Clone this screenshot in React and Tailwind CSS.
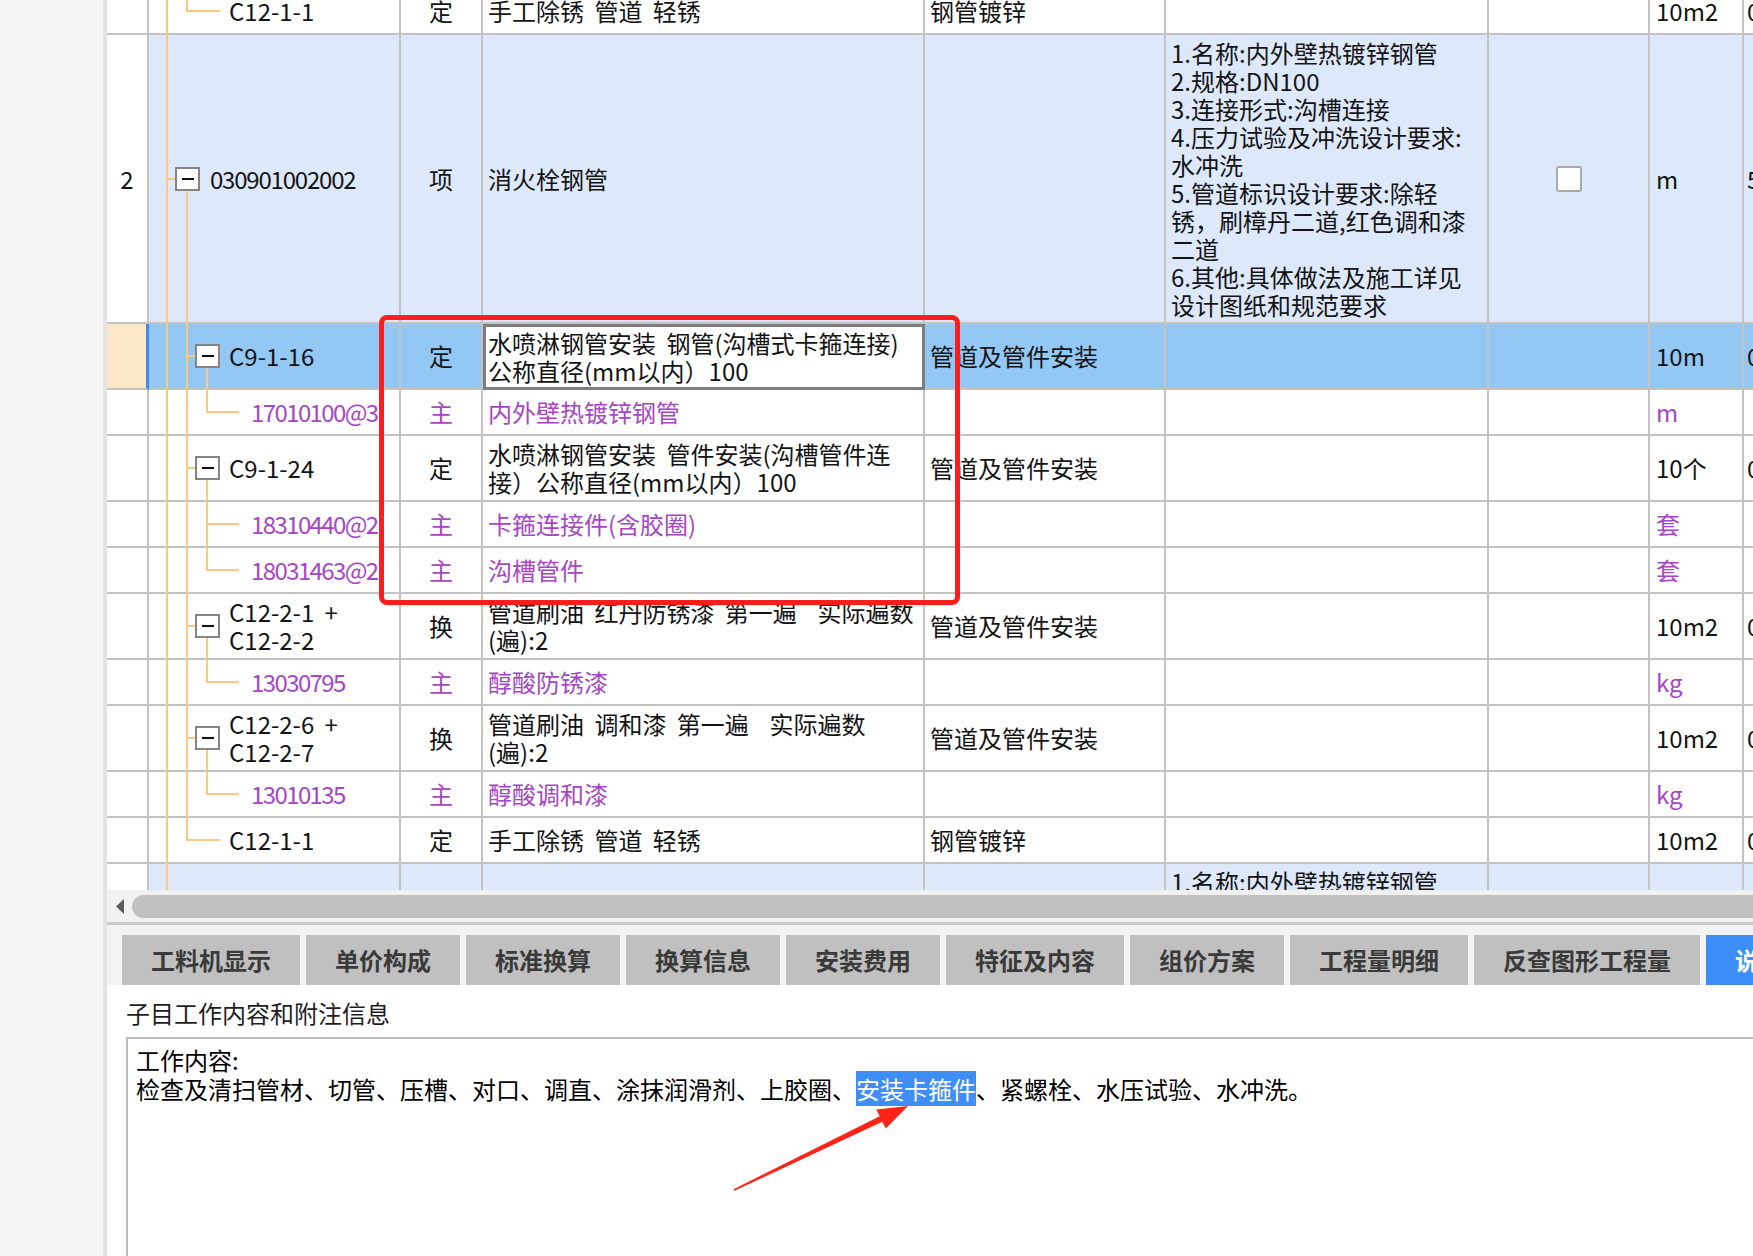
import React from 'react';

const FEATURES = [
  '1.名称:内外壁热镀锌钢管',
  '2.规格:DN100',
  '3.连接形式:沟槽连接',
  '4.压力试验及冲洗设计要求:',
  '水冲洗',
  '5.管道标识设计要求:除轻',
  '锈，刷樟丹二道,红色调和漆',
  '二道',
  '6.其他:具体做法及施工详见',
  '设计图纸和规范要求',
];

const ROWS = [
  { h: 'h-[46px]', t: { b: 'top', hb: true }, lv: 3, code: ['C12-1-1'], type: '定', name: ['手工除锈 管道 轻锈'], spec: '钢管镀锌', unit: '10m2', last: '0.6' },
  { h: 'h-[289px]', bg: 'b', num: '2', t: { box2: true, b: 'box' }, lv: 2, code: ['030901002002'], type: '项', name: ['消火栓钢管'], feat: FEATURES, check: true, unit: 'm', last: '5' },
  { h: 'h-[66px]', bg: 's', edit: true, t: { b: 'full', box3: true, c: 'box' }, lv: 3, code: ['C9-1-16'], type: '定', name: ['水喷淋钢管安装 钢管(沟槽式卡箍连接)', '公称直径(mm以内）100'], spec: '管道及管件安装', unit: '10m', last: '0.6' },
  { h: 'h-[46px]', p: true, t: { b: 'full', c: 'top', hc: true }, lv: 4, code: ['17010100@3'], type: '主', name: ['内外壁热镀锌钢管'], unit: 'm' },
  { h: 'h-[66px]', t: { b: 'full', box3: true, c: 'box' }, lv: 3, code: ['C9-1-24'], type: '定', name: ['水喷淋钢管安装 管件安装(沟槽管件连', '接）公称直径(mm以内）100'], spec: '管道及管件安装', unit: '10个', last: '0.6' },
  { h: 'h-[46px]', p: true, t: { b: 'full', c: 'full', hc: true }, lv: 4, code: ['18310440@2'], type: '主', name: ['卡箍连接件(含胶圈)'], unit: '套' },
  { h: 'h-[46px]', p: true, t: { b: 'full', c: 'top', hc: true }, lv: 4, code: ['18031463@2'], type: '主', name: ['沟槽管件'], unit: '套' },
  { h: 'h-[66px]', t: { b: 'full', box3: true, c: 'box' }, lv: 3, code: ['C12-2-1 +', 'C12-2-2'], type: '换', name: ['管道刷油 红丹防锈漆 第一遍  实际遍数', '(遍):2'], spec: '管道及管件安装', unit: '10m2', last: '0.6' },
  { h: 'h-[46px]', p: true, t: { b: 'full', c: 'top', hc: true }, lv: 4, code: ['13030795'], type: '主', name: ['醇酸防锈漆'], unit: 'kg' },
  { h: 'h-[66px]', t: { b: 'full', box3: true, c: 'box' }, lv: 3, code: ['C12-2-6 +', 'C12-2-7'], type: '换', name: ['管道刷油 调和漆 第一遍  实际遍数', '(遍):2'], spec: '管道及管件安装', unit: '10m2', last: '0.6' },
  { h: 'h-[46px]', p: true, t: { b: 'full', c: 'top', hc: true }, lv: 4, code: ['13010135'], type: '主', name: ['醇酸调和漆'], unit: 'kg' },
  { h: 'h-[46px]', t: { b: 'top', hb: true }, lv: 3, code: ['C12-1-1'], type: '定', name: ['手工除锈 管道 轻锈'], spec: '钢管镀锌', unit: '10m2', last: '0.6' },
  { h: 'h-[289px]', bg: 'b', t: {}, lv: 2, code: [], name: [], feat: ['1.名称:内外壁热镀锌钢管'], featTop: true },
];

const TABS = ['工料机显示', '单价构成', '标准换算', '换算信息', '安装费用', '特征及内容', '组价方案', '工程量明细', '反查图形工程量'];

const C = 'shrink-0 flex items-center';
const G = 'border-r-2 border-b-2 border-[#c3c3c3]';
const L = 'absolute bg-[#fcc77e]';

function Box({ left }) {
  return (
    <span className={`absolute ${left} top-[calc(50%-12px)] w-[25px] h-[24px] border-2 border-[#858585] bg-white flex items-center justify-center`}>
      <span className="w-[12px] h-[2px] bg-[#111]" />
    </span>
  );
}

function Tree({ t = {} }) {
  return (
    <>
      <span className={`${L} left-[17px] w-[2px] top-0 -bottom-[2px]`} />
      {t.b === 'full' && <span className={`${L} left-[37px] w-[2px] top-0 -bottom-[2px]`} />}
      {t.b === 'top' && <span className={`${L} left-[37px] w-[2px] top-0 h-[calc(50%+1px)]`} />}
      {t.b === 'box' && <span className={`${L} left-[37px] w-[2px] top-[calc(50%+12px)] -bottom-[2px]`} />}
      {t.hb && <span className={`${L} left-[38px] w-[33px] top-[calc(50%-1px)] h-[2px]`} />}
      {t.c === 'full' && <span className={`${L} left-[57px] w-[2px] top-0 -bottom-[2px]`} />}
      {t.c === 'top' && <span className={`${L} left-[57px] w-[2px] top-0 h-[calc(50%+1px)]`} />}
      {t.c === 'box' && <span className={`${L} left-[57px] w-[2px] top-[calc(50%+12px)] -bottom-[2px]`} />}
      {t.hc && <span className={`${L} left-[58px] w-[32px] top-[calc(50%-1px)] h-[2px]`} />}
      {t.box2 && <span className={`${L} left-[18px] w-[8px] top-[calc(50%-1px)] h-[2px]`} />}
      {t.box2 && <Box left="left-[26px]" />}
      {t.box3 && <span className={`${L} left-[38px] w-[8px] top-[calc(50%-1px)] h-[2px]`} />}
      {t.box3 && <Box left="left-[46px]" />}
    </>
  );
}

function Lines({ items }) {
  return (
    <div className="whitespace-pre">
      {items.map((l, i) => (
        <div key={i}>{l}</div>
      ))}
    </div>
  );
}

function Row({ r, first }) {
  const bg = r.bg === 'b' ? 'bg-[#dde9fb]' : r.bg === 's' ? 'bg-[#93c7f4]' : 'bg-white';
  const tc = r.p ? 'text-[#a646c4]' : 'text-[#141414]';
  const pl = r.lv === 2 ? 'pl-[61px] tracking-[-1.2px]' : r.lv === 3 ? 'pl-[80px]' : 'pl-[102px] tracking-[-1.6px]';
  const numCls =
    r.bg === 's'
      ? `${C} w-[42px] justify-center bg-[#fde7c9] border-b-2 border-r-[3px] border-b-[#c3c3c3] border-r-[#3a8aef]`
      : `${C} ${G} w-[42px] justify-center bg-white`;

  return (
    <div className={`flex shrink-0 ${r.h} ${first ? '-mt-[11px]' : ''}`}>
      <div className={numCls}>{r.num}</div>
      <div className={`${C} ${G} w-[252px] relative ${bg}`}>
        <Tree t={r.t} />
        <div className={`${pl} ${tc}`}>
          <Lines items={r.code} />
        </div>
      </div>
      <div className={`${C} ${G} w-[82px] justify-center ${bg} ${tc}`}>{r.type}</div>
      <div className={`${C} ${G} w-[442px] relative pl-[5px] ${bg} ${tc}`}>
        {r.edit ? (
          <div className="absolute left-0 top-0 right-[-2px] bottom-[-2px] border-[3px] border-[#7d7d7d] bg-white flex items-center pl-[2px]">
            <Lines items={r.name} />
          </div>
        ) : (
          <Lines items={r.name} />
        )}
      </div>
      <div className={`${C} ${G} w-[241px] pl-[5px] ${bg}`}>{r.spec}</div>
      <div className={`shrink-0 flex ${r.featTop ? 'items-start pt-[4px]' : 'items-center'} ${G} w-[323px] pl-[5px] ${bg}`}>
        {r.feat && <Lines items={r.feat} />}
      </div>
      <div className={`${C} ${G} w-[161px] justify-center ${bg}`}>
        {r.check && <span className="w-[26px] h-[26px] rounded-[3px] border-2 border-[#aaaaaa] bg-white" />}
      </div>
      <div className={`${C} ${G} w-[94px] pl-[6px] ${bg} ${tc}`}>{r.unit}</div>
      <div className={`${C} ${G} w-[80px] pl-[3px] ${bg}`}>{r.last}</div>
    </div>
  );
}

export default function App() {
  return (
    <div className="relative flex w-[1753px] h-[1256px] overflow-hidden bg-[#f4f4f4] font-['Noto_Sans_CJK_SC','Noto_Sans',sans-serif] text-[24px] leading-[28px] text-[#141414] [word-spacing:5px]">
      <div className="w-[103px] shrink-0 bg-[#f4f4f4]" />
      <div className="w-[4px] shrink-0 bg-[#e3e3e3]" />

      <main className="flex-1 min-w-0 flex flex-col">
        {/* quota grid */}
        <div className="relative h-[890px] shrink-0 overflow-hidden bg-white">
          {ROWS.map((r, i) => (
            <Row key={i} r={r} first={i === 0} />
          ))}
          <div className="absolute left-[272px] top-[315px] w-[581px] h-[290px] border-[5px] border-[#fd1d1d] rounded-[8px]" />
        </div>

        {/* horizontal scrollbar */}
        <div className="h-[32px] shrink-0 bg-[#f1f1f1] flex items-start pt-[5px]">
          <svg className="ml-[9px] mt-[4px] shrink-0" width="8" height="15" viewBox="0 0 8 15">
            <polygon points="8,0 0,7.5 8,15" fill="#5c5c5c" />
          </svg>
          <div className="ml-[8px] flex-1 h-[23px] rounded-l-full bg-[#c1c1c1]" />
        </div>
        <div className="h-[3px] shrink-0 bg-[#cbcbcb]" />

        {/* tabs */}
        <div className="h-[60px] shrink-0 bg-[#f3f3f3] flex items-end gap-[6px] pl-[15px] overflow-hidden">
          {TABS.map((t) => (
            <div key={t} className="h-[50px] shrink-0 px-[29px] flex items-center bg-[#c0c0c0] text-[#3a3a3a] font-bold whitespace-nowrap">
              {t}
            </div>
          ))}
          <div className="h-[50px] shrink-0 px-[29px] flex items-center bg-[#3d8ef6] text-white font-bold whitespace-nowrap">
            说明信息
          </div>
        </div>

        {/* detail panel */}
        <div className="flex-1 bg-white flex flex-col pl-[19px]">
          <div className="h-[52px] shrink-0 pt-[14px] text-[#1e1e1e]">子目工作内容和附注信息</div>
          <div className="flex-1 border-t-2 border-l-2 border-[#bdbdbd] pl-[8px] pt-[6px] leading-[29px] text-black">
            <div>工作内容:</div>
            <div className="whitespace-nowrap">
              检查及清扫管材、切管、压槽、对口、调直、涂抹润滑剂、上胶圈、
              <span className="bg-[#3f8ef5] text-white">安装卡箍件</span>
              、紧螺栓、水压试验、水冲洗。
            </div>
          </div>
        </div>
      </main>

      <svg className="absolute left-0 top-0 pointer-events-none" width="1753" height="1256" viewBox="0 0 1753 1256">
        <polygon
          points="733.5,1189.2 879.7,1116.3 876.2,1109.5 908,1106 885.8,1128.6 882.3,1121.7 734.5,1190.8"
          fill="#ff2318"
        />
      </svg>
    </div>
  );
}
